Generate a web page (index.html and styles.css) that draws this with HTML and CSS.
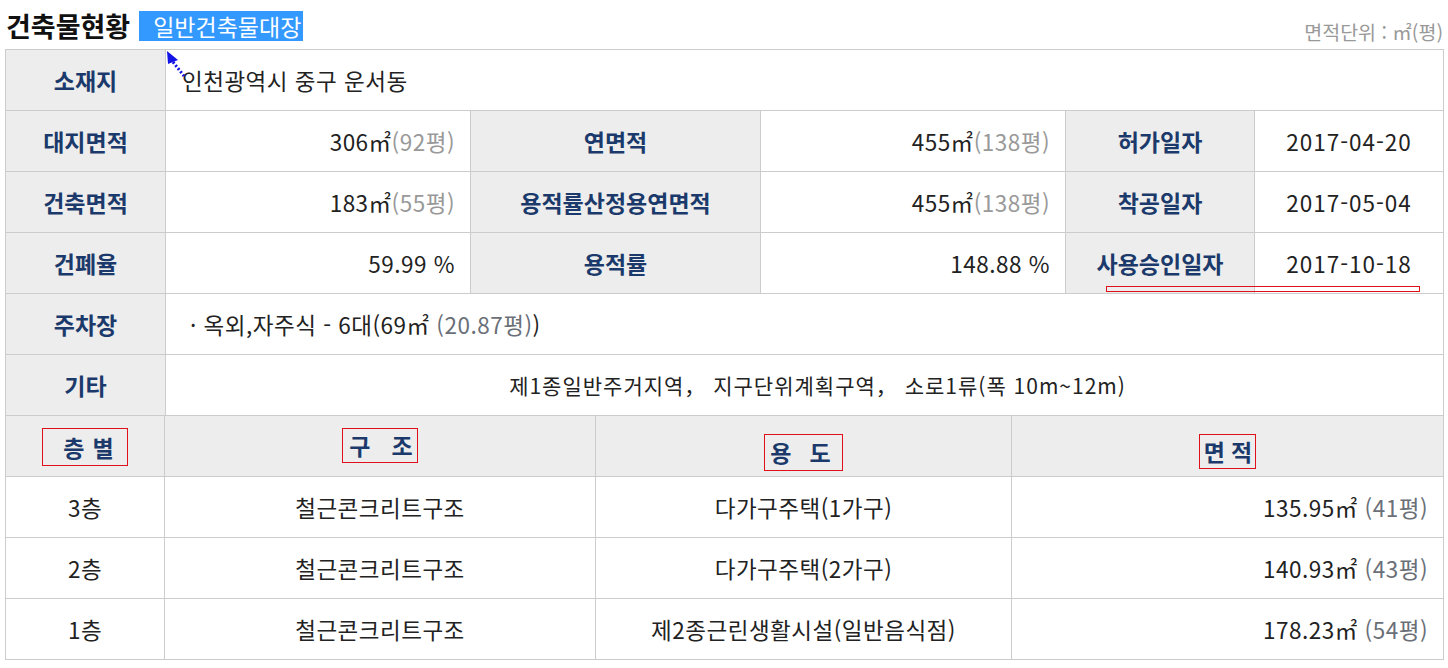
FILE: index.html
```html
<!DOCTYPE html>
<html lang="ko">
<head>
<meta charset="utf-8">
<title>건축물현황</title>
<link rel="stylesheet" href="styles.css">
</head>
<body>
<div class="page">
  <div class="head">
    <h2 class="title">건축물현황<span class="sel">일반건축물대장</span></h2>
    <span class="unit">면적단위 : ㎡(평)</span>
  </div>
  <div class="tables">
    <table class="info">
      <colgroup>
        <col class="c1"><col class="c2"><col class="c3"><col class="c4"><col class="c5"><col class="c6">
      </colgroup>
      <tr>
        <th>소재지</th>
        <td colspan="5" class="left">인천광역시 중구 운서동</td>
      </tr>
      <tr>
        <th>대지면적</th>
        <td class="num">306㎡<span class="py">(92평)</span></td>
        <th>연면적</th>
        <td class="num">455㎡<span class="py">(138평)</span></td>
        <th>허가일자</th>
        <td class="center date">2017-04-20</td>
      </tr>
      <tr>
        <th>건축면적</th>
        <td class="num">183㎡<span class="py">(55평)</span></td>
        <th>용적률산정용연면적</th>
        <td class="num">455㎡<span class="py">(138평)</span></td>
        <th>착공일자</th>
        <td class="center date">2017-05-04</td>
      </tr>
      <tr>
        <th>건폐율</th>
        <td class="num">59.99 %</td>
        <th>용적률</th>
        <td class="num">148.88 %</td>
        <th>사용승인일자</th>
        <td class="center date">2017-10-18</td>
      </tr>
      <tr>
        <th>주차장</th>
        <td colspan="5" class="left park">· 옥외,자주식 - 6대(69㎡ <span class="py2">(20.87평)</span>)</td>
      </tr>
      <tr>
        <th>기타</th>
        <td colspan="5" class="center etc">제1종일반주거지역， 지구단위계획구역， 소로1류(폭 10m~12m)</td>
      </tr>
    </table>
    <table class="floors">
      <colgroup>
        <col class="f1"><col class="f2"><col class="f3"><col class="f4">
      </colgroup>
      <tr>
        <th><span class="mark m1"><span class="g">층</span>별</span></th>
        <th><span class="mark m2"><span class="g">구</span>조</span></th>
        <th><span class="mark m3"><span class="g">용</span>도</span></th>
        <th><span class="mark m4"><span class="g">면</span>적</span></th>
      </tr>
      <tr>
        <td class="center">3층</td>
        <td class="center">철근콘크리트구조</td>
        <td class="center">다가구주택(1가구)</td>
        <td class="num">135.95㎡ <span class="py2">(41평)</span></td>
      </tr>
      <tr>
        <td class="center">2층</td>
        <td class="center">철근콘크리트구조</td>
        <td class="center">다가구주택(2가구)</td>
        <td class="num">140.93㎡ <span class="py2">(43평)</span></td>
      </tr>
      <tr>
        <td class="center">1층</td>
        <td class="center">철근콘크리트구조</td>
        <td class="center">제2종근린생활시설(일반음식점)</td>
        <td class="num">178.23㎡ <span class="py2">(54평)</span></td>
      </tr>
    </table>
    <svg class="arrow" width="30" height="34" viewBox="0 0 30 34">
      <polygon points="2,2 3,15 13,11" fill="#1414e6"/>
      <line x1="8" y1="13" x2="19" y2="27" stroke="#1414e6" stroke-width="3" stroke-dasharray="2 2"/>
    </svg>
    <div class="underline-mark"></div>
  </div>
</div>
</body>
</html>
```

FILE: styles.css
```css
* { box-sizing: border-box; }

body {
  margin: 0;
  background: #fff;
  font-family: "Noto Sans CJK KR", "Noto Sans", sans-serif;
  color: #222;
}

.page {
  padding: 0 5px;
}

.head {
  height: 49px;
  display: flex;
  justify-content: space-between;
  align-items: flex-start;
}

.title {
  margin: 11px 0 0 1px;
  font-size: 27px;
  font-weight: 700;
  line-height: 30px;
  color: #111;
  display: flex;
  align-items: center;
}

.sel {
  margin-left: 9px;
  padding: 0 2px 0 14px;
  background: #3399ff;
  color: #fff;
  font-size: 23px;
  font-weight: 400;
  line-height: 30px;
}

.unit {
  margin-top: 19px;
  font-size: 19.5px;
  color: #999;
  line-height: 26px;
}

.tables {
  position: relative;
}

table {
  width: 100%;
  table-layout: fixed;
  border-collapse: collapse;
}

th, td {
  border: 1px solid #cccccc;
  height: 61px;
  padding: 0 15px;
  font-size: 22.5px;
  font-weight: 400;
  white-space: nowrap;
}

th {
  background: #ededed;
  color: #1b3a6b;
  font-size: 23px;
  font-weight: 700;
  text-align: center;
}

td {
  color: #222;
  letter-spacing: 0.5px;
}

.c1 { width: 160px; }
.c2 { width: 305px; }
.c3 { width: 290px; }
.c4 { width: 305px; }
.c5 { width: 189px; }
.c6 { width: 189px; }

.f1 { width: 159px; }
.f2 { width: 431px; }
.f3 { width: 416px; }
.f4 { width: 432px; }

.floors tr:first-child th { border-top: 0; height: 60px; }

.left { text-align: left; padding-left: 16px; }
.park { padding-left: 24px; }
.num { text-align: right; }
.center { text-align: center; }
.date { letter-spacing: 1px; }

.etc {
  font-size: 21px;
  letter-spacing: 1px;
  padding-left: 41px;
  padding-right: 15px;
}

.py { color: #999; }
.py2 { color: #6a6f78; }

.mark {
  display: inline-block;
  border: 1px solid #e0101a;
  vertical-align: middle;
}
.m1 { padding: 0 13px 0 20px; line-height: 36px; margin-top: 0; }
.m1 .g { margin-right: 8px; }
.m2 { padding: 0 4px 0 6px; line-height: 33px; margin-bottom: 3px; }
.m2 .g { margin-right: 21px; }
.m3 { padding: 0 11px 0 5px; line-height: 35px; margin-top: 13px; }
.m3 .g { margin-right: 18px; }
.m4 { padding: 0 3px 0 4px; line-height: 33px; margin-top: 12px; }
.m4 .g { margin-right: 6px; }

.arrow {
  position: absolute;
  left: 160px;
  top: 0;
}

.underline-mark {
  position: absolute;
  left: 1101px;
  top: 237px;
  width: 314px;
  height: 6px;
  border: 1px solid #e0101a;
}
```
